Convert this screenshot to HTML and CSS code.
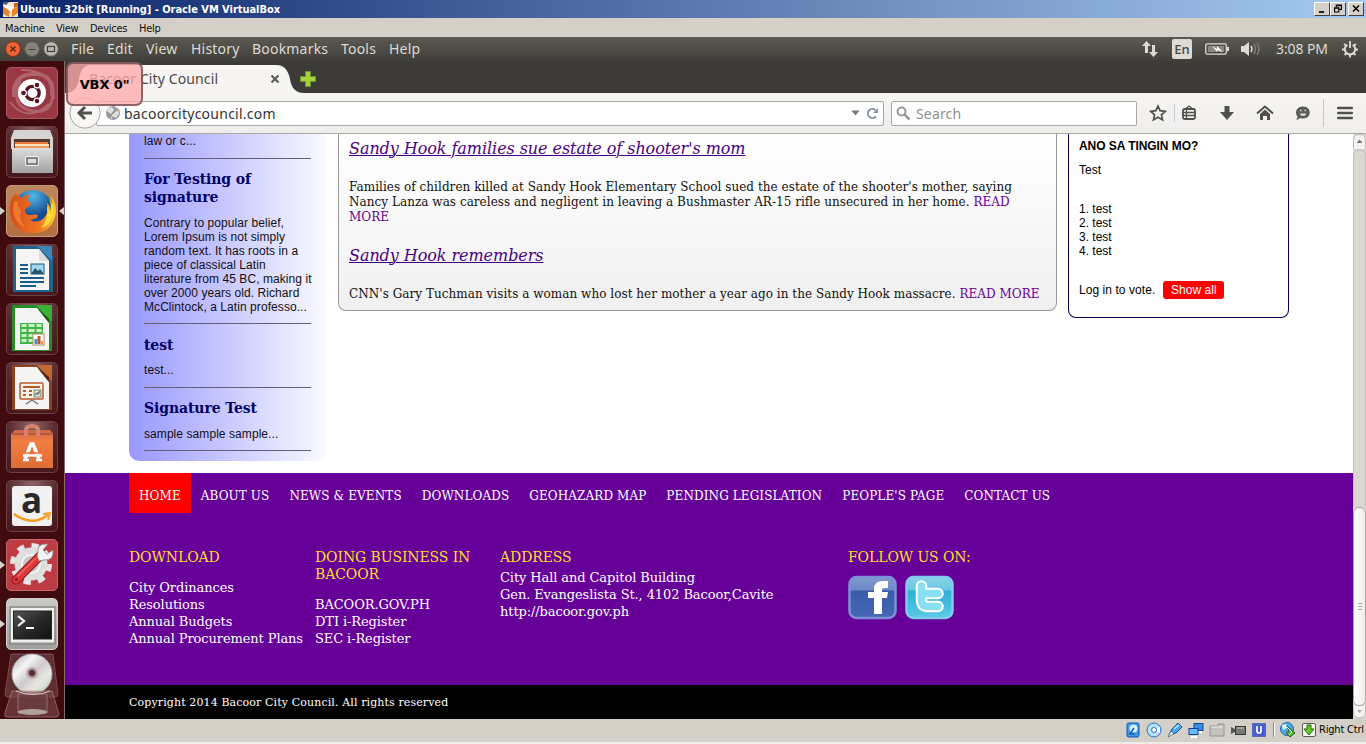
FILE: index.html
```html
<!DOCTYPE html>
<html lang="en">
<head>
<meta charset="utf-8">
<title>Ubuntu 32bit [Running] - Oracle VM VirtualBox</title>
<link rel="stylesheet" href="styles.css">
</head>
<body>
<div class="vm">
  <header class="titlebar">
    <svg class="title-icon" width="17" height="17" viewBox="0 0 17 17"><rect x="1" y="1" width="15" height="15" fill="#f6e7d2"/><path d="M1 5 8 8 7 16 1 13zM10 8l6-3v7l-6 4z" fill="#e9832c"/><path d="M3 3 8 6l7-4-1 4-6 4-6-4z" fill="#fff"/><path d="M1 1h6L4 4 1 3z" fill="#555d72"/><path d="M12 2h4v3l-4 2z" fill="#d65d20"/></svg>
    <span class="title-text">Ubuntu 32bit [Running] - Oracle VM VirtualBox</span>
    <div class="win-buttons">
      <svg class="win-btn" width="16" height="14" viewBox="0 0 15 14"><path d="M4 10.5h6" stroke="#000" stroke-width="2"/></svg>
      <svg class="win-btn" width="16" height="14" viewBox="0 0 15 14"><path d="M5.500 5V2.500h6v5H9M5 3h7" fill="none" stroke="#000" stroke-width="1.300"/><path d="M3.500 5.500h5v5h-5zM3 6h6" fill="none" stroke="#000" stroke-width="1.300"/></svg>
      <svg class="win-btn win-close" width="16" height="14" viewBox="0 0 15 14"><path d="m4 3 7 7m0-7-7 7" stroke="#000" stroke-width="1.700"/></svg>
    </div>
  </header>
  <nav class="vm-menu"><span class="vm-machine">Machine</span><span class="vm-view">View</span><span class="vm-devices">Devices</span><span>Help</span></nav>

  <div class="panel">
    <div class="panel-buttons">
      <svg width="16" height="16" viewBox="0 0 16 16"><circle cx="8" cy="8" r="7.500" fill="#ee6237" stroke="#7b3018"/><path d="m5.500 5.500 5 5m0-5-5 5" stroke="#5b2412" stroke-width="1.300"/></svg>
      <svg width="16" height="16" viewBox="0 0 16 16"><circle cx="8" cy="8" r="7.300" fill="#85827a" stroke="#5d5a53"/><path d="M4.500 8.500h7" stroke="#403e38"/></svg>
      <svg width="16" height="16" viewBox="0 0 16 16"><circle cx="8" cy="8" r="7.300" fill="#b8b6af" stroke="#5d5a53"/><rect x="4.500" y="5.500" width="7" height="5" fill="none" stroke="#403e38" stroke-width="1.200"/></svg>
    </div>
    <nav class="app-menu"><span class="m-file">File</span><span class="m-edit">Edit</span><span class="m-view">View</span><span class="m-history">History</span><span class="m-bookmarks">Bookmarks</span><span class="m-tools">Tools</span><span>Help</span></nav>
    <div class="indicators">
      <svg class="i-net" width="18" height="18" viewBox="0 0 18 18"><path d="M5.500 1 10 6H7v7H4V6H1zM12.500 17 8 12h3V5h3v7h3z" fill="#dfdbd2"/></svg>
      <span class="i-lang">En</span>
      <svg class="i-batt" width="25" height="14" viewBox="0 0 25 14"><rect x=".8" y="1.800" width="20.500" height="10.400" rx="1.500" fill="none" stroke="#dfdbd2" stroke-width="1.300"/><rect x="3" y="4" width="16" height="6" fill="#8a877f"/><path d="M22 5h2v4h-2z" fill="#dfdbd2"/><path d="m7 4 5 3V4l6 6-6-2v2z" fill="#fff"/></svg>
      <svg class="i-vol" width="21" height="16" viewBox="0 0 21 16"><path d="M1 5h3l5-4v14l-5-4H1z" fill="#dfdbd2"/><path d="M11 5q2 3 0 6" stroke="#dfdbd2" stroke-width="1.500" fill="none"/><path d="M14 3q3 5 0 10M17 2q4 6 0 12" stroke="#85827a" stroke-width="1.300" fill="none"/></svg>
      <span class="i-clock">3:08 PM</span>
      <svg class="i-gear" width="18" height="18" viewBox="0 0 18 18"><path d="M6.300 4.800a5.200 5.200 0 1 0 5.400 0" fill="none" stroke="#dfdbd2" stroke-width="2"/><path d="M9 1v7M3 4l2 1.500M15 4l-2 1.500M1 9.500h3m10 0h3M3.500 15l2-2m9 2-2-2M9 14v3.500" stroke="#dfdbd2" stroke-width="1.800"/></svg>
    </div>
  </div>

  <div class="desktop">
    <aside class="launcher">
      <div class="tile tile-dash"><svg viewBox="0 0 52 52"><g fill="none" stroke="#fff" opacity=".22"><path d="M8 30Q6 8 27 7t19 22" stroke-width="4"/><path d="M14 13Q3 40 27 44t19-29" stroke-width="3"/><path d="M15 3q32-1 33 29M4 35q17 22 39 2" stroke-width="2"/></g><circle cx="26" cy="26" r="14" fill="#fff"/><circle cx="26.500" cy="26" r="6.700" fill="none" stroke="#581722" stroke-width="3.300"/><g fill="#581722" stroke="#fff" stroke-width="1.200"><circle cx="17.500" cy="26" r="2.900"/><circle cx="31" cy="18" r="2.900"/><circle cx="31" cy="34" r="2.900"/></g></svg></div>
      <div class="tile"><svg viewBox="0 0 52 52"><defs><linearGradient id="grey" x2="0" y2="1"><stop stop-color="#ddd"/><stop offset="1" stop-color="#a2a2a0"/></linearGradient></defs><path d="M8 4h36l3 8v11H5V12z" fill="#d5d4d2"/><path d="M8 13h36v9H8z" fill="#573b31"/><path d="M9 16h33v2H9z" fill="#ed7b42"/><path d="M9 18h34v2H9z" fill="#f7e2bf"/><path d="M9 20h34v2H9z" fill="#e99b62"/><path d="M6 22h41v25H6z" fill="url(#grey)"/><rect x="19" y="30" width="14" height="10" rx="1.500" fill="#eee"/><rect x="21" y="32" width="10" height="6" fill="#ddd" stroke="#666" stroke-width="1.500"/></svg></div>
      <div class="tile tile-fox run active"><svg viewBox="0 0 52 52"><defs><radialGradient id="globe" cx=".5" cy=".15"><stop stop-color="#51b9e8"/><stop offset="1" stop-color="#174c91"/></radialGradient><linearGradient id="fox" x2="1"><stop stop-color="#d64b1c"/><stop offset=".65" stop-color="#f17820"/><stop offset="1" stop-color="#fbd32b"/></linearGradient></defs><circle cx="27" cy="25" r="20" fill="url(#globe)"/><path d="M6 13 10 8q2 4 6 5 4-4 8-3-3 3-2 6l4 3-7 5q0 6 5 6 6-1 8 0 0 4-8 5 8 4 14-2 5-5 3-15 4 3 3 8 4-7 0-16 6 6 6 17-3 21-23 21T4 28Q3 20 6 13z" fill="url(#fox)"/><path d="M43 13q9 14 0 25-3 4-8 5 8-8 6-22 3 4 3 8 2-9-1-16z" fill="#ffdc38"/><path d="M8 16q-4 20 12 27-8-8-5-18-4-4-3-8z" fill="#f69439" opacity=".6"/></svg></div>
      <div class="tile"><svg viewBox="0 0 52 52"><path d="M7 2h30l10 10v36H7z" fill="#1f628c"/><path d="M31 2h15v15z" fill="#3d87b4"/><path d="M10 5h23l10 12v29H10z" fill="#f5f5f5"/><path d="M33 5v12h10z" fill="#ddd"/><path d="M14 21h8M14 25h8M14 29h8M14 34h24M14 38h24M14 42h16" stroke="#175f8a" stroke-width="2"/><rect x="25" y="20" width="13" height="10" fill="#a3d7ee" stroke="#185d82"/><path d="m25 30 4-6 3 3 2-2 4 5z" fill="#26566c"/></svg></div>
      <div class="tile"><svg viewBox="0 0 52 52"><path d="M6 2h30l10 10v36H6z" fill="#258f24"/><path d="M30 2h16v17z" fill="#3bb036"/><path d="M9 5h22l12 13v29H9z" fill="#f4f4f4"/><path d="m31 5 12 15V16z" fill="#1b531c"/><path d="M14 20h23v21H14z" fill="#42b747"/><path d="M15.500 22.500h5m2 0h6m2 0h5m-20 5h5m2 0h6m2 0h5m-20 5h5m2 0h6m-13 5h5m2 0h6" stroke="#cff0cb" stroke-width="2.800"/><rect x="27" y="31" width="11" height="11" fill="#fff" stroke="#a98e61"/><path d="M30 41v-5" stroke="#4b8fc0" stroke-width="3"/><path d="M33 41v-8" stroke="#df481d" stroke-width="3"/><path d="M36 41v-3" stroke="#e6a030" stroke-width="2"/></svg></div>
      <div class="tile"><svg viewBox="0 0 52 52"><path d="M6 3h30l10 11v34H6z" fill="#8e431d"/><path d="M31 3h15v16z" fill="#c26a35"/><path d="M9 5h22l12 15v27H9z" fill="#f5f5f5"/><path d="m31 5 12 15V15z" fill="#4d2618"/><rect x="14" y="21" width="23" height="16" rx="1" fill="#fff2e7" stroke="#b65a2c" stroke-width="1.500"/><path d="M17 25h17M17 29h3m3 0h3m-9 4h3m3 0h3" stroke="#b65a2c" stroke-width="2"/><rect x="28" y="28" width="7" height="7" fill="#d6efd8" stroke="#555" stroke-width=".7"/><path d="m29 33 2-2 1 1 2-3M26 38l-6 4m6-4 6 4" fill="none" stroke="#777" stroke-width="1.500"/></svg></div>
      <div class="tile"><svg viewBox="0 0 52 52"><defs><linearGradient id="bag" x2="0" y2="1"><stop stop-color="#cf6947"/><stop offset=".3" stop-color="#f17c43"/><stop offset="1" stop-color="#df6c36"/></linearGradient></defs><path d="M5 13 9 9h35l3 4v34H5z" fill="url(#bag)"/><path d="M6 13h40" stroke="#9d3f26"/><path d="M20 15V9q0-4 6-4t6 4v6" fill="none" stroke="#d88270" stroke-width="4"/><path d="m19 38 6-15h2l6 15" fill="none" stroke="#fff" stroke-width="3.600"/><path d="M17 34.500h19M17 39h6m7 0h6" stroke="#fff" stroke-width="2.500"/><path d="M17 32h18" stroke="#e87640" stroke-width="1.500"/></svg></div>
      <div class="tile"><svg viewBox="0 0 52 52"><rect x="6" y="6" width="40" height="40" rx="3" fill="#f1f1f1"/><text x="25.500" y="33" text-anchor="middle" class="amazon-a">a</text><path d="M8 34q18 13 34 1" fill="none" stroke="#f49b20" stroke-width="2.500"/><path d="m37 34 7-1-2 7" fill="none" stroke="#f49b20" stroke-width="1.800"/></svg></div>
      <div class="tile tile-gear run"><svg viewBox="0 0 52 52"><circle cx="25" cy="25" r="18" fill="none" stroke="#e5e5e5" stroke-width="6" stroke-dasharray="7 7.130"/><circle cx="25" cy="25" r="16.500" fill="#dedede"/><circle cx="25" cy="25" r="9" fill="#c9c5c5" stroke="#f6f6f6" stroke-width="2"/><path d="m10 41 25-25" stroke="#8d1520" stroke-width="9" stroke-linecap="round"/><path d="m10 41 25-25" stroke="#dc3939" stroke-width="7" stroke-linecap="round"/><path d="m12 37 18-18" stroke="#f36b67" stroke-width="1.500"/><path d="m31 17 2 5 5-1q10 1 9-10l-6 4-4-4 5-6q-11-1-10 8z" fill="#f2f2f2" stroke="#888" stroke-width=".8"/><circle cx="10.500" cy="40.500" r="1.700" fill="#941c26"/></svg></div>
      <div class="tile tile-term run"><svg viewBox="0 0 52 52"><defs><linearGradient id="screen" x2="1" y2="1"><stop stop-color="#555"/><stop offset=".5" stop-color="#292929"/><stop offset="1" stop-color="#111"/></linearGradient></defs><rect x="4" y="9" width="45" height="37" fill="#b9bbb9" stroke="#777"/><rect x="5" y="10" width="43" height="34" fill="#f1f1ef"/><rect x="7.500" y="13" width="38" height="28" fill="url(#screen)" stroke="#222"/><path d="m12 18 6 5-6 5M20 30h8" fill="none" stroke="#f5f5f5" stroke-width="2.200"/></svg></div>
      <svg class="stack" width="56" height="66" viewBox="0 0 56 66"><defs><linearGradient id="disc" x2="1" y2="1"><stop stop-color="#aaa"/><stop offset=".3" stop-color="#f5f5f5"/><stop offset=".5" stop-color="#cec9cd"/><stop offset=".7" stop-color="#e7e9df"/><stop offset="1" stop-color="#b5c8bd"/></linearGradient></defs><path d="M7 1h42l5 40q0 3-3 3H4q-3 0-3-3z" fill="#6a3b3e" stroke="#8c6060" opacity=".75"/><circle cx="28" cy="21" r="20" fill="url(#disc)" stroke="#aaa"/><circle cx="28" cy="20" r="6" fill="#b9adb0"/><circle cx="28" cy="20" r="3.500" fill="#582d30" stroke="#907b7e"/><path d="M8 38h40l7 23q0 3-4 3H3q-3 0-2-4z" fill="#7b484b" opacity=".65" stroke="#b98b8a"/><path d="M14 41h29v18H14z" fill="#694044" stroke="#a98584" opacity=".7"/><ellipse cx="28.500" cy="59" rx="15" ry="3" fill="#b0a09d"/><path d="M12 38q17 7 34 0" stroke="#d5cbc8" fill="none"/></svg>
    </aside>

    <main class="browser">
      <div class="tabs">
        <svg class="tab-shape" width="232" height="32" viewBox="0 0 232 32"><path d="M0 32Q12 32 14 18 16 4 26 4H212Q222 4 225 18 227 32 239 32z" fill="#f6f5f3"/></svg>
        <span class="tab-title">Bacoor City Council</span><svg class="tab-x" width="10" height="10" viewBox="0 0 10 10"><path d="m1.500 1.500 7 7m0-7-7 7" stroke="#5d5d5b" stroke-width="2.200"/></svg>
        <svg class="tab-plus" width="18" height="18" viewBox="0 0 18 18"><path d="M6.500 1.500h5v5h5v5h-5v5h-5v-5h-5v-5h5z" fill="#a6d13c" stroke="#6a972c"/></svg>
      </div>
      <div class="toolbar">
        <svg class="back" width="32" height="32" viewBox="0 0 32 32"><circle cx="16" cy="16" r="15.200" fill="#f8f7f6" stroke="#aaa7a2"/><path d="m16 10-6 6 6 6M10 16h13" fill="none" stroke="#51504d" stroke-width="3"/></svg>
        <div class="url">
          <svg width="16" height="16" viewBox="0 0 16 16"><circle cx="8" cy="8" r="7" fill="#999"/><path d="m3 3 4-1 2 3-3 4-4-3zm6 5 4-3 1 4-3 4-4-2z" fill="#e2e2e2"/><path d="m6 14 2-5M10 2l3 2" stroke="#ddd"/></svg>
          <span class="url-text">bacoorcitycouncil.com</span>
          <svg width="9" height="6" viewBox="0 0 9 6" class="url-drop"><path d="M.5.500h8L4.500 5.500z" fill="#777"/></svg>
          <svg width="13" height="13" viewBox="0 0 13 13"><path d="M10 9.500A4.600 4.600 0 1 1 9.500 3" fill="none" stroke="#8a94a0" stroke-width="2"/><path d="M7 6h5V1z" fill="#8a94a0"/></svg>
        </div>
        <div class="search"><svg width="15" height="15" viewBox="0 0 15 15"><circle cx="5.500" cy="5.500" r="4" fill="none" stroke="#999" stroke-width="2"/><path d="m8.500 8.500 5 5" stroke="#999" stroke-width="2.500"/></svg><span class="search-text">Search</span></div>
        <div class="tools">
          <svg class="t-star" width="18" height="18" viewBox="0 0 18 18"><path d="m9 2 2.100 4.700 5.200.600-3.900 3.500 1.100 5.100L9 13.300l-4.500 2.600 1.100-5.100L1.700 7.300l5.200-.600z" fill="none" stroke="#51504d" stroke-width="1.700"/></svg>
          <i class="t-sep1"></i>
          <svg class="t-list" width="16" height="16" viewBox="0 0 16 16"><rect x="2" y="4" width="12" height="10" rx="1.500" fill="none" stroke="#51504d" stroke-width="1.800"/><path d="M5 3.500 8 1l3 2.500M2 7.500h12M2 10.500h12M5.500 4v10" fill="none" stroke="#51504d" stroke-width="1.300"/></svg>
          <svg class="t-down" width="16" height="16" viewBox="0 0 16 16"><path d="M5.500 1h5v6H15l-7 8-7-8h4.500z" fill="#51504d"/></svg>
          <svg class="t-home" width="18" height="16" viewBox="0 0 18 16"><path d="m1 8.500 8-7 8 7" fill="none" stroke="#51504d" stroke-width="2"/><path d="m4 9 5-4.500L14 9v6h-3v-4H7v4H4z" fill="#51504d"/></svg>
          <svg class="t-chat" width="16" height="16" viewBox="0 0 16 16"><path d="M8 1.500c9 0 9 12 0 12-2 0-2-.3-3-.5-1 1-2 1.500-4 1.500q1.500-1 1.500-3C-1 7 2 1.500 8 1.500z" fill="#5b5a57"/><path d="M4.500 8.500h7q-1 2.500-3.500 2.500T4.500 8.500z" fill="#ddd"/><path d="M5 5.500h1.500m3 0H11" stroke="#ddd" stroke-width="1.500"/></svg>
          <i class="t-sep2"></i>
          <svg class="t-menu" width="16" height="14" viewBox="0 0 16 14"><path d="M1.200 2h13.600M1.200 7h13.600M1.200 12h13.600" stroke="#51504d" stroke-width="2.600" stroke-linecap="round"/></svg>
        </div>
      </div>

      <div class="viewport">
        <div class="page">
          <div class="columns">
            <section class="sidebar">
              <p>law or c...</p><hr class="rule r10">
              <h3 class="g11">For Testing of<br>signature</h3>
              <p class="g10">Contrary to popular belief,<br>Lorem Ipsum is not simply<br>random text. It has roots in a<br>piece of classical Latin<br>literature from 45 BC, making it<br>over 2000 years old. Richard<br>McClintock, a Latin professo...</p><hr class="rule r9">
              <h3 class="g12">test</h3><p class="g9">test...</p><hr class="rule r10">
              <h3 class="g11">Signature Test</h3><p class="g10">sample sample sample...</p><hr class="rule r9">
            </section>
            <section class="news">
              <h2 class="first">Sandy Hook families sue estate of shooter's mom</h2>
              <p>Families of children killed at Sandy Hook Elementary School sued the estate of the shooter's mother, saying<br>Nancy Lanza was careless and negligent in leaving a Bushmaster AR-15 rifle unsecured in her home. <a>READ<br>MORE</a></p>
              <h2>Sandy Hook remembers</h2>
              <p>CNN's Gary Tuchman visits a woman who lost her mother a year ago in the Sandy Hook massacre. <a>READ MORE</a></p>
            </section>
            <section class="poll">
              <b>ANO SA TINGIN MO?</b>
              <p class="question">Test</p>
              <p class="answers">1. test<br>2. test<br>3. test<br>4. test</p>
              <div class="vote"><span>Log in to vote.</span><span class="show-all">Show all</span></div>
            </section>
          </div>
          <footer class="footer">
            <nav class="site-nav"><span class="current">HOME</span><span>ABOUT US</span><span>NEWS &amp; EVENTS</span><span>DOWNLOADS</span><span>GEOHAZARD MAP</span><span>PENDING LEGISLATION</span><span>PEOPLE'S PAGE</span><span>CONTACT US</span></nav>
            <div class="foot-cols">
              <div><h4>DOWNLOAD</h4><p>City Ordinances<br>Resolutions<br>Annual Budgets<br>Annual Procurement Plans</p></div>
              <div><h4>DOING BUSINESS IN<br>BACOOR</h4><p>BACOOR.GOV.PH<br>DTI i-Register<br>SEC i-Register</p></div>
              <div><h4>ADDRESS</h4><p class="address">City Hall and Capitol Building<br>Gen. Evangeslista St., 4102 Bacoor,Cavite<br>http://bacoor.gov.ph</p></div>
              <div><h4>FOLLOW US ON:</h4>
                <div class="social">
                  <svg width="49" height="45" viewBox="0 0 49 45"><defs><linearGradient id="fb" x2="0" y2="1"><stop stop-color="#8299cf"/><stop offset=".32" stop-color="#6d86c6"/><stop offset=".34" stop-color="#3a5ba8"/><stop offset="1" stop-color="#4567b6"/></linearGradient></defs><rect x="1.500" y="2" width="46" height="41" rx="7" fill="url(#fb)" stroke="#7f91d6" stroke-width="2.500"/><path d="M26 39V23h-6v-6h6v-3q0-8 9-8h5v7h-4q-2 0-2 2v2h6l-1 6h-5v16z" fill="#fff"/></svg>
                  <svg width="49" height="45" viewBox="0 0 49 45"><defs><linearGradient id="tw" x2="0" y2="1"><stop stop-color="#8bd3ea"/><stop offset=".32" stop-color="#69c6e2"/><stop offset=".34" stop-color="#30aed3"/><stop offset="1" stop-color="#5bcbe8"/></linearGradient></defs><rect x="1.500" y="2" width="46" height="41" rx="7" fill="url(#tw)" stroke="#83cbee" stroke-width="2.500"/><g fill="none" stroke-linecap="round" stroke-linejoin="round"><path d="M16.500 11v14q0 6.500 6 6.500H33M17 18.500h16" stroke="#fff" stroke-width="11.500"/><path d="M16.500 11v14q0 6.500 6 6.500H33M17 18.500h16" stroke="#8bdff0" stroke-width="7.500"/></g></svg>
                </div>
              </div>
            </div>
          </footer>
          <div class="copyright">Copyright 2014 Bacoor City Council. All rights reserved</div>
        </div>
        <div class="scrollbar">
          <svg class="s-up" width="13" height="15" viewBox="0 0 13 15"><path d="M.5 15V6Q.5.500 6.500.500T12.500 6v9" fill="#f5f4f2" stroke="#bbb8b3"/><path d="m3.500 9 3-3.500 3 3.500z" fill="#777"/></svg>
          <div class="track"></div>
          <div class="thumb"><i></i><i></i><i></i></div>
          <svg width="13" height="13" viewBox="0 0 13 13"><path d="M.5 0v7q0 5 6 5t6-5V0" fill="#f5f4f2" stroke="#bbb8b3"/><path d="m4 4 2.500 3L9 4z" fill="#aaa"/></svg>
        </div>
      </div>
    </main>
    <div class="vbx">VBX 0"</div>
  </div>

  <div class="status">
    <svg viewBox="0 0 16 16"><rect x="2" y="1" width="12" height="14" rx="1.500" fill="#3d9bea" stroke="#1550b5"/><circle cx="8.500" cy="6.500" r="4" fill="#d9f2ff"/><path d="m5 12 4-6M4 12h6" stroke="#1a57ba" stroke-width="1.500"/></svg>
    <svg viewBox="0 0 16 16"><circle cx="8" cy="8" r="7" fill="#b8e0fb" stroke="#2872c4"/><path d="M8 8 14 5v6z" fill="#fff"/><circle cx="8" cy="8" r="2.500" fill="#fff" stroke="#2a72c0"/></svg>
    <svg viewBox="0 0 16 16"><path d="m2 13 3-6 6-6 4 4-6 6z" fill="#42a6f4" stroke="#194faf"/><path d="m4 9 3 3-6 3z" fill="#eaf4fc" stroke="#555" stroke-width=".7"/><path d="m7 7 5-4" stroke="#c3edff" stroke-width="1.500"/></svg>
    <svg viewBox="0 0 16 16"><rect x="6" y="1.500" width="9" height="7" fill="#368fe0" stroke="#173e9b"/><path d="M9 10h5" stroke="#fff" stroke-width="2"/><rect x="1" y="6.500" width="9" height="6" fill="#65bcff" stroke="#173e9b"/><path d="M3 15h6" stroke="#fff" stroke-width="2"/></svg>
    <svg viewBox="0 0 16 16"><path d="M1 4h8V2h6v12H1z" fill="#c3c1bc" stroke="#98958f"/><path d="M2 5h12" stroke="#eee"/></svg>
    <svg viewBox="0 0 16 16"><path d="M1 5v7l4-2V7z" fill="#555"/><rect x="5.500" y="4.500" width="10" height="8" fill="#777" stroke="#333"/><path d="M7 6h7" stroke="#ccc"/></svg>
    <svg viewBox="0 0 16 16"><rect x="1.500" y="1.500" width="13" height="13" fill="#5063d7" stroke="#2337a0" stroke-dasharray="1 1"/><rect x="3" y="3" width="10" height="10" fill="#4259cf"/><path d="M6 4v5q0 2 2 2t2-2V4" fill="none" stroke="#fff" stroke-width="1.700"/></svg>
    <i class="status-sep"></i>
    <svg viewBox="0 0 16 16"><circle cx="7" cy="7" r="6.500" fill="#4ba8e9" stroke="#236a9c"/><path d="m2 3 4-1 1 4-4 2z" fill="#d8f1f6"/><path d="m7 4 8 7-5 4-4-4 3-2z" fill="#54b637" stroke="#275d24"/><path d="m7 5 5 5-3 3" fill="none" stroke="#e4ffe0"/></svg>
    <svg viewBox="0 0 16 16"><rect x="1.500" y="1.500" width="13" height="13" rx="1.500" fill="#f3f5ed" stroke="#5c5c50"/><path d="M6 3h4v4h3l-5 6-5-6h3z" fill="#63c71c" stroke="#20720d"/></svg>
    <span class="host-key">Right Ctrl</span>
  </div>
</div>
</body>
</html>
```

FILE: styles.css
```css
* { box-sizing: border-box; }
body { margin: 0; background: #d4d0c8; font-family: "Liberation Sans", sans-serif; overflow: hidden; }
p, h2, h3, h4 { margin: 0; }
svg { display: block; flex: none; }
.vm { width: 1366px; height: 744px; display: flex; flex-direction: column; white-space: nowrap; overflow: hidden; }

/* VirtualBox window */
.titlebar { height: 18px; flex: none; display: flex; align-items: center; padding: 0 2px; background: linear-gradient(90deg, #0a246a, #a6caf0); color: #fff; }
.title-icon { margin-right: 1px; }
.title-text { font: bold 11px "DejaVu Sans Condensed", sans-serif; font-stretch: condensed; letter-spacing: -.04px; }
.win-buttons { display: flex; margin-left: auto; }
.win-btn { background: #d4d0c8; border: 1px solid; border-color: #fff #404040 #404040 #fff; }
.win-close { margin-left: 2px; }
.vm-menu { height: 19px; flex: none; display: flex; align-items: center; padding: 1px 0 0 5px; font: 11px "DejaVu Sans Condensed", sans-serif; font-stretch: condensed; letter-spacing: -.25px; color: #111; }
.vm-machine { width: 51px; } .vm-view { width: 34px; } .vm-devices { width: 49px; }

/* Ubuntu panel */
.panel { height: 24px; flex: none; display: flex; align-items: center; background: linear-gradient(#5b5950, #403f3a); color: #dfdbd2; font: 15px/24px "Noto Sans", sans-serif; }
.panel-buttons { display: flex; gap: 3px; padding-left: 5px; width: 71px; }
.app-menu { display: flex; font-size: 14px; letter-spacing: .2px; }
.m-file { width: 36px; } .m-edit { width: 39px; } .m-view { width: 45px; } .m-history { width: 61px; } .m-bookmarks { width: 89px; } .m-tools { width: 48px; }
.indicators { margin-left: auto; display: flex; align-items: center; padding-right: 7px; }
.i-lang { background: #dfdbd2; color: #47453f; width: 20px; height: 20px; border-radius: 2px; font-size: 13px; font-weight: 500; line-height: 21px; text-align: center; margin: 0 13px; }
.i-vol { margin-left: 10px; }
.i-clock { width: 53px; margin: 0 12px 0 15px; font-size: 14px; letter-spacing: -.1px; }

.desktop { height: 658px; flex: none; display: flex; position: relative; }
.launcher { width: 65px; flex: none; padding: 6px 0 0 6px; background: #3f0b0e; border-right: 1px solid #8a6a68; display: flex; flex-direction: column; gap: 7px; overflow: hidden; }
.tile { width: 52px; height: 52px; flex: none; border-radius: 5px; border: 1px solid #6c4044; background: radial-gradient(circle at 50% 5%, #8b6366, #532629 50%, #45171a); position: relative; }
.tile svg { width: 52px; height: 52px; margin: -1px; overflow: visible; }
.tile-dash { background: #993743; border-color: #a9565e; }
.tile-fox { background: linear-gradient(#bd875e, #b26f3f); border-color: #c49a7b; }
.tile-gear { background: #bd3c43; border-color: #c8686c; }
.tile-term { background: linear-gradient(#c9c8c5, #a3a19f); border-color: #d0cfcc; }
.run::before { content: ""; position: absolute; left: -7px; top: 21px; border: 4px solid transparent; border-left: 5px solid #d8d2ce; border-right: 0; }
.active::after { content: ""; position: absolute; right: -7px; top: 21px; border: 4px solid transparent; border-right: 5px solid #d8d2ce; border-left: 0; }
.amazon-a { font: bold 35px "Open Sans", sans-serif; fill: #292929; }
.stack { margin: -4px 0 0 -2px; }
.vbx { position: absolute; left: 66px; top: 1px; width: 77px; height: 44px; border: 2px solid rgba(105, 70, 70, .75); border-radius: 7px; background: rgba(255, 170, 170, .78); font: bold 13px/42px "DejaVu Sans", sans-serif; letter-spacing: -.1px; color: #000; text-align: center; }

/* Firefox */
.browser { width: 1301px; flex: none; display: flex; flex-direction: column; }
.tabs { height: 32px; background: #3c3b37; display: flex; position: relative; align-items: center; padding-left: 24px; font: 14px "Noto Sans", sans-serif; color: #4b4a48; }
.tab-shape { position: absolute; left: 0; top: 0; overflow: visible; }
.tab-title { position: relative; width: 181px; padding-top: 3px; letter-spacing: .12px; }
.tab-x { position: relative; margin-top: 4px; }
.tab-plus { margin-left: 19px; margin-top: 4px; }
.toolbar { height: 41px; background: linear-gradient(#f6f5f3, #efeeec); border-bottom: 1px solid #aaa8a3; display: flex; align-items: center; padding-left: 4px; font: 14px "Noto Sans", sans-serif; }
.back { position: relative; }
.url { width: 788px; height: 25px; margin-left: -5px; border: 1px solid #aaa7a2; border-radius: 2px; background: #fff; display: flex; align-items: center; padding: 0 4px 0 8px; color: #333; }
.url-text { flex: 1; margin-left: 3px; letter-spacing: .25px; }
.url-drop { margin-right: 6px; }
.search { width: 246px; height: 25px; margin-left: 7px; border: 1px solid #aaa7a2; border-radius: 2px; background: #fff; display: flex; align-items: center; gap: 5px; padding-left: 4px; color: #8e8e8c; margin-right: 12px; letter-spacing: .15px; }
.tools { display: flex; align-items: center; }
.t-sep1 { width: 1px; height: 18px; background: #ccc; margin: 0 6px 0 7px; }
.t-list { margin-right: 22px; } .t-down { margin-right: 21px; } .t-home { margin-right: 21px; }
.t-sep2 { width: 1px; height: 28px; background: #c9c7c3; margin: 0 13px 0 12px; }

.viewport { height: 585px; display: flex; }
.page { width: 1288px; flex: none; background: #fff; overflow: hidden; }
.columns { height: 339px; display: flex; align-items: flex-start; padding-left: 64px; }
.sidebar { width: 197px; height: 327px; padding: 0 15px; border-radius: 0 0 10px 10px; background: linear-gradient(90deg, #9898ff, #fafaff); font: 12px/14px "Liberation Sans", sans-serif; letter-spacing: .07px; color: #111; }
.sidebar h3 { font: bold 14px/18px "DejaVu Serif", serif; letter-spacing: -.1px; color: #000066; }
.rule { border: 0; height: 1px; background: #625f78; margin-bottom: 0; }
.r9 { margin-top: 9px; } .r10 { margin-top: 10px; }
.g9 { margin-top: 9px; } .g10 { margin-top: 10px; } .g11 { margin-top: 11px; } .g12 { margin-top: 12px; }
.news { width: 719px; height: 177px; margin-left: 12px; padding: 0 10px; border: 1px solid #999; border-top: 0; border-radius: 0 0 8px 8px; background: linear-gradient(#fff, #f0f0f0); font: 12px/15px "DejaVu Serif", serif; letter-spacing: .04px; color: #111; }
.news h2 { font: italic 16px/20px "DejaVu Serif", serif; letter-spacing: -.06px; color: #4b0082; text-decoration: underline; text-decoration-thickness: 1px; margin: 21px 0; }
.news .first { margin-top: 5px; }
.news a { color: #660099; }
.poll { width: 221px; height: 184px; margin-left: 11px; padding: 5px 10px 0; border: 1px solid #000050; border-top: 0; border-radius: 0 0 8px 8px; font: 12px/14px "Liberation Sans", sans-serif; color: #000; }
.poll b { display: block; letter-spacing: -.06px; }
.question { margin-top: 10px; }
.answers { margin-top: 25px; }
.vote { display: flex; align-items: center; margin-top: 23px; gap: 8px; letter-spacing: .06px; }
.show-all { background: #f00; color: #fff; border-radius: 3px; width: 61px; line-height: 18px; text-align: center; }

.footer { height: 212px; padding-left: 64px; background: #660099; color: #fff; font: 13px/17px "DejaVu Serif", serif; letter-spacing: -.1px; }
.site-nav { display: flex; height: 76px; font: 12px/46px "DejaVu Serif", serif; letter-spacing: .1px; }
.site-nav span { padding: 0 10px; height: 40px; }
.site-nav .current { background: #f00; }
.foot-cols { display: grid; grid-template-columns: 186px 185px 348px 200px; }
.foot-cols h4 { font: 14px/17px "DejaVu Serif", serif; letter-spacing: -.1px; color: #ffde2e; margin-bottom: 13px; }
.foot-cols .address { margin-top: -10px; }
.social { display: flex; gap: 8px; margin-top: -4px; }
.copyright { height: 34px; padding-left: 64px; background: #000; color: #fff; font: 11px/36px "DejaVu Serif", serif; letter-spacing: .12px; }
.scrollbar { width: 13px; background: #dedbd7; display: flex; flex-direction: column; }
.track { height: 358px; border: 1px solid #c3c0bb; border-bottom: 0; border-radius: 6px 6px 0 0; background: #dad7d3; }
.thumb { height: 199px; border: 1px solid #aba8a3; border-radius: 6px; background: linear-gradient(90deg, #fff, #eeedeb); display: flex; flex-direction: column; justify-content: center; align-items: center; gap: 2px; }
.thumb i { width: 4px; height: 1px; background: #aaa; }

.status { height: 25px; display: flex; align-items: flex-start; padding: 3px 0 0 1125px; border-bottom: 2px solid #efede9; background: #d4d0c8; }
.status svg { width: 16px; height: 16px; margin-right: 5px; }
.status-sep { width: 2px; height: 15px; border-left: 1px solid #888; border-right: 1px solid #fff; margin: 0 5px 0 1px; }
.host-key { font: 11px/16px "DejaVu Sans Condensed", sans-serif; font-stretch: condensed; letter-spacing: -.2px; margin-left: -3px; }
```
